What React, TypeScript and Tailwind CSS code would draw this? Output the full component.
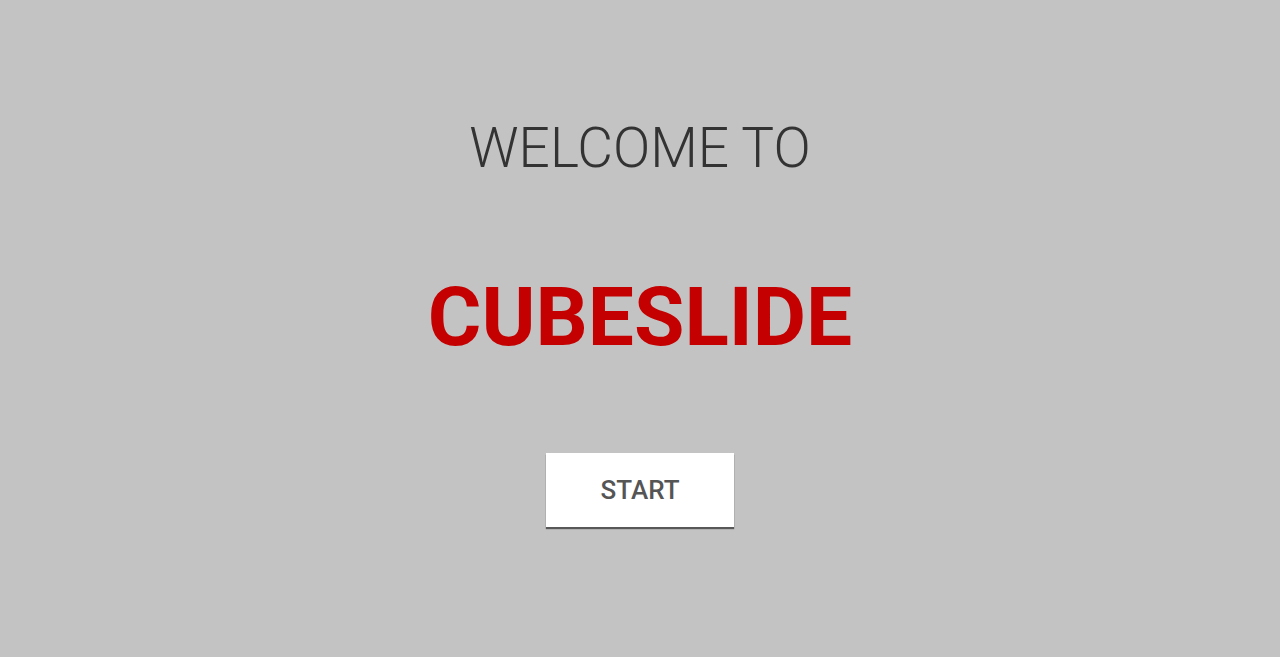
export default function App() {
  return (
    <div
      className="flex h-[657px] w-full flex-col items-center bg-[#c3c3c3]"
      style={{ fontFamily: "Roboto, 'Liberation Sans', sans-serif" }}
    >
      <h2 className="mt-[121px] text-[55px] font-light leading-none text-[#333333]">
        WELCOME TO
      </h2>
      <h1 className="mt-[100px] text-[82px] font-bold leading-none text-[#c40000]">
        CUBESLIDE
      </h1>
      <button className="mt-[95px] h-[74px] w-[188px] bg-white text-[26px] font-medium text-[#555555] shadow-[0_2px_1px_rgba(0,0,0,0.55)]">
        START
      </button>
    </div>
  );
}
